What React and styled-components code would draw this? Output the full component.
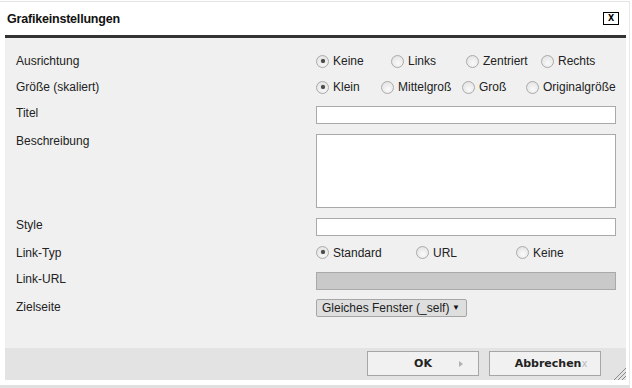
import React from "react";
import styled, { createGlobalStyle } from "styled-components";

const GlobalStyle = createGlobalStyle`
  html, body {
    margin: 0;
    padding: 0;
    background: #fff;
  }
  body {
    font-family: "Liberation Sans", Arial, sans-serif;
    font-size: 12px;
    color: #222;
  }
`;

const Dialog = styled.div`
  width: 629px;
  height: 383px;
  margin-top: 1px;
  border-top: 1px solid #e4e4e4;
  border-right: 1px solid #e8e8e8;
  border-bottom: 3px solid #e0e0e0;
  background: #fff;
  display: flex;
  flex-direction: column;
`;

const TitleBar = styled.div`
  height: 33px;
  flex: none;
  display: flex;
  align-items: center;
  justify-content: space-between;
  padding: 0 10px 0 7px;
`;

const Title = styled.h1`
  margin: 0;
  font-size: 12.5px;
  font-weight: bold;
  letter-spacing: -0.2px;
  color: #111;
`;

const CloseBox = styled.button`
  width: 16px;
  height: 13px;
  padding: 0;
  border: 1px solid #000;
  background: #fff;
  font-family: "DejaVu Sans", sans-serif;
  font-size: 8px;
  font-weight: bold;
  line-height: 11px;
  color: #000;
  text-align: center;
`;

const Panel = styled.div`
  margin: 0 3px 0 5px;
  border-top: 3px solid #333;
  display: flex;
  flex-direction: column;
`;

const Body = styled.div`
  height: 310px;
  box-sizing: border-box;
  background: #f0f0f0;
  padding: 14px 10px 0 11px;
  display: flex;
  flex-direction: column;
  gap: 8px;
`;

const Row = styled.div`
  display: grid;
  grid-template-columns: 300px 300px;
  align-items: ${(p) => (p.$radio ? "center" : "start")};
  min-height: ${(p) => (p.$radio ? "18px" : "0")};
`;

const Label = styled.div`
  line-height: 16px;
  padding-top: ${(p) => (p.$field ? 1 : 0)}px;
  color: #222;
`;

const RadioGroup = styled.div`
  display: grid;
  grid-template-columns: ${(p) => p.$cols};
  align-items: center;
`;

const Option = styled.label`
  display: flex;
  align-items: center;
  gap: 4px;
  white-space: nowrap;
  line-height: 16px;
  color: #222;
`;

const Radio = styled.span`
  width: 11px;
  height: 11px;
  flex: none;
  border-radius: 50%;
  border: 1px solid #aaa;
  background: radial-gradient(circle at 55% 65%, #fafafa 0%, #dedede 100%);
  display: flex;
  align-items: center;
  justify-content: center;
  transform: translateY(${(p) => p.$shift || 0}px);
  &::after {
    content: "";
    width: 4px;
    height: 4px;
    border-radius: 50%;
    background: #4a4a4a;
    box-shadow: 0 0 1px #666;
    display: ${(p) => (p.$checked ? "block" : "none")};
  }
`;

const TextInput = styled.div`
  box-sizing: border-box;
  width: 300px;
  height: ${(p) => p.$h || 18}px;
  margin-top: ${(p) => p.$mt ?? 2}px;
  border: 1px solid #a9a9a9;
  background: ${(p) => (p.$disabled ? "#c9c9c9" : "#fff")};
`;

const Select = styled.div`
  box-sizing: border-box;
  width: 151px;
  height: 18px;
  margin-top: 1px;
  border: 1px solid #a6a6a6;
  border-radius: 2px;
  background: #dedede;
  display: flex;
  align-items: center;
  justify-content: space-between;
  padding: 0 6px 0 5px;
  color: #222;
  line-height: 16px;
`;

const Caret = styled.span`
  font-size: 8px;
  color: #111;
`;

const Footer = styled.div`
  position: relative;
  height: 32px;
  box-sizing: border-box;
  background: #e3e3e3;
  display: flex;
  justify-content: flex-end;
  align-items: flex-start;
  gap: 10px;
  padding: 3px 25px 0 0;
`;

const Button = styled.button`
  width: 112px;
  height: 25px;
  box-sizing: border-box;
  border: 1px solid #a6a6a6;
  background: #f1f1f1;
  font-family: "DejaVu Sans", Verdana, sans-serif;
  font-size: 11px;
  font-weight: bold;
  color: #222;
  padding: 0;
  display: grid;
  grid-template-columns: ${(p) => (p.$arrow ? "1fr auto 1fr" : "1fr")};
  align-items: center;
  justify-items: center;
`;

const Arrow = styled.span`
  justify-self: end;
  margin-right: 15px;
  width: 0;
  height: 0;
  border-top: 3px solid transparent;
  border-bottom: 3px solid transparent;
  border-left: 4px solid #b0b0b0;
`;

const CancelText = styled.span`
  padding-left: 12px;
  display: flex;
  align-items: baseline;
`;

const CancelX = styled.span`
  color: #bcbcbc;
  font-weight: normal;
  font-size: 10px;
`;

const Grip = styled.svg`
  position: absolute;
  right: 0;
  bottom: 0;
`;

const Spacer = styled.div`
  height: 5px;
`;

export default function App() {
  return (
    <>
      <GlobalStyle />
      <Dialog>
        <TitleBar>
          <Title>Grafikeinstellungen</Title>
          <CloseBox>X</CloseBox>
        </TitleBar>
        <Panel>
          <Body>
            <Row $radio>
              <Label>Ausrichtung</Label>
              <RadioGroup $cols="75px 75px 75px auto">
                <Option><Radio $checked />Keine</Option>
                <Option><Radio />Links</Option>
                <Option><Radio />Zentriert</Option>
                <Option><Radio />Rechts</Option>
              </RadioGroup>
            </Row>
            <Row $radio>
              <Label>Größe (skaliert)</Label>
              <RadioGroup $cols="65px 81px 64px auto">
                <Option><Radio $checked />Klein</Option>
                <Option><Radio />Mittelgroß</Option>
                <Option><Radio />Groß</Option>
                <Option><Radio />Originalgröße</Option>
              </RadioGroup>
            </Row>
            <Row>
              <Label $field>Titel</Label>
              <TextInput />
            </Row>
            <Row>
              <Label $field>Beschreibung</Label>
              <TextInput $h={74} />
            </Row>
            <Row>
              <Label $field>Style</Label>
              <TextInput />
            </Row>
            <Row $radio>
              <Label>Link-Typ</Label>
              <RadioGroup $cols="100px 100px 100px">
                <Option><Radio $checked $shift={-1} />Standard</Option>
                <Option><Radio $shift={-1} />URL</Option>
                <Option><Radio $shift={-1} />Keine</Option>
              </RadioGroup>
            </Row>
            <Row>
              <Label $field>Link-URL</Label>
              <TextInput $disabled />
            </Row>
            <Row>
              <Label $field>Zielseite</Label>
              <Select>
                Gleiches Fenster (_self)
                <Caret>▼</Caret>
              </Select>
            </Row>
          </Body>
          <Footer>
            <Button $arrow>
              <span />
              <span>OK</span>
              <Arrow />
            </Button>
            <Button>
              <CancelText>
                Abbrechen<CancelX>x</CancelX>
              </CancelText>
            </Button>
            <Grip width="13" height="13" viewBox="0 0 13 13">
              <g stroke="#8a8a8a" strokeWidth="1">
                <line x1="1" y1="13" x2="13" y2="1" />
                <line x1="5" y1="13" x2="13" y2="5" />
                <line x1="9" y1="13" x2="13" y2="9" />
              </g>
            </Grip>
          </Footer>
          <Spacer />
        </Panel>
      </Dialog>
    </>
  );
}
